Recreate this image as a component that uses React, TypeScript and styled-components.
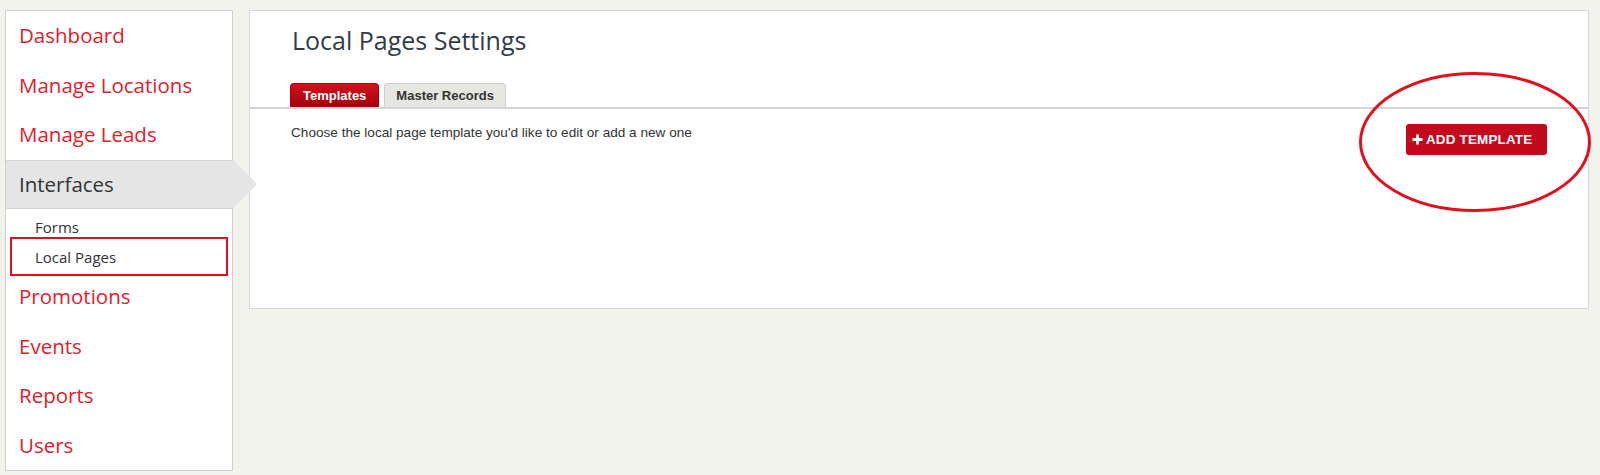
import React from "react";
import styled, { createGlobalStyle, css } from "styled-components";

const GlobalStyle = createGlobalStyle`
  html, body { margin: 0; padding: 0; }
  body {
    background: #f3f3ee;
    font-family: "Open Sans", "Liberation Sans", sans-serif;
  }
`;

const Page = styled.div`
  display: flex;
  align-items: flex-start;
  gap: 16px;
  padding: 10px 11px 0 5px;
  min-height: 475px;
  box-sizing: border-box;
`;

const Sidebar = styled.nav`
  width: 228px;
  flex: 0 0 228px;
  box-sizing: border-box;
  background: #fff;
  border: 1px solid #cfcfcf;
  padding-bottom: 0;
`;

const NavItem = styled.div<{ $active?: boolean }>`
  position: relative;
  height: 49.5px;
  box-sizing: border-box;
  padding: 10px 0 0 13px;
  font-size: 20.5px;
  line-height: 28px;
  color: #e1202b;
  ${(p) =>
    p.$active &&
    css`
      z-index: 2;
      background: #e5e5e5;
      color: #333;
      border-top: 1px solid #d6d6d6;
      border-bottom: 1px solid #d6d6d6;
      margin-right: -1px;
      padding-top: 9px;
      &::after {
        content: "";
        position: absolute;
        top: -1px;
        right: -24px;
        width: 24px;
        height: calc(100% + 2px);
        background: #e5e5e5;
        clip-path: polygon(0 0, 100% 50%, 0 100%);
      }
    `}
`;

const SubMenu = styled.div`
  padding: 3px 0 0;
`;

const SubItem = styled.div<{ $highlighted?: boolean }>`
  position: relative;
  padding-left: 29px;
  font-size: 15px;
  line-height: 30px;
  color: #333;
  ${(p) =>
    p.$highlighted &&
    css`
      &::after {
        content: "";
        position: absolute;
        left: 4px;
        right: 4px;
        top: -5px;
        bottom: -4px;
        border: 2px solid #e3101c;
        box-sizing: border-box;
      }
    `}
`;

const Panel = styled.main`
  position: relative;
  z-index: 1;
  flex: 1;
  height: 299px;
  box-sizing: border-box;
  background: #fff;
  border: 1px solid #d6d6d6;
`;

const Title = styled.h1`
  margin: 0;
  padding: 12px 0 0 42px;
  font-family: "Open Sans", "Liberation Sans", sans-serif;
  font-weight: 400;
  font-size: 25px;
  line-height: 34px;
  color: #333c46;
`;

const TabBar = styled.div`
  display: flex;
  gap: 5px;
  margin-top: 26px;
  padding-left: 40px;
  border-bottom: 2px solid #d4d4d4;
`;

const Tab = styled.div<{ $active?: boolean }>`
  height: 24px;
  box-sizing: border-box;
  padding: 0 11px;
  border-radius: 4px 4px 0 0;
  font-family: "Liberation Sans", Arial, sans-serif;
  font-weight: 700;
  font-size: 13px;
  line-height: 23px;
  ${(p) =>
    p.$active
      ? css`
          background: linear-gradient(#d3101e, #a6000d);
          color: #fff;
          border: 1px solid #b0000f;
          border-bottom: none;
          padding: 0 12px;
        `
      : css`
          background: #e6e6e2;
          color: #333;
          border: 1px solid #cfcfcf;
          border-bottom: none;
        `}
`;

const ContentRow = styled.div`
  display: flex;
  justify-content: space-between;
  align-items: flex-start;
  padding: 15px 41px 0 41px;
`;

const Description = styled.p`
  margin: 0;
  padding-top: 1px;
  font-family: "Liberation Sans", Arial, sans-serif;
  font-size: 13.6px;
  line-height: 16px;
  color: #333;
`;

const AddButton = styled.button`
  display: flex;
  align-items: center;
  gap: 3px;
  width: 141px;
  height: 31px;
  padding: 0 0 0 6px;
  border: none;
  border-radius: 3px;
  background: #c30a1c;
  color: #fff;
  font-family: "Liberation Sans", Arial, sans-serif;
  font-weight: 700;
  font-size: 13.4px;
  letter-spacing: 0.2px;
  white-space: nowrap;
  cursor: pointer;
`;

const Annotation = styled.svg`
  position: absolute;
  left: 1109px;
  top: 61px;
  overflow: visible;
  pointer-events: none;
`;

const PlusIcon = () => (
  <svg width="11" height="11" viewBox="0 0 11 11">
    <path d="M5.5 0.5V10.5M0.5 5.5H10.5" stroke="#fff" strokeWidth="2.8" />
  </svg>
);

export default function App() {
  return (
    <>
      <GlobalStyle />
      <Page>
        <Sidebar>
          <NavItem>Dashboard</NavItem>
          <NavItem>Manage Locations</NavItem>
          <NavItem>Manage Leads</NavItem>
          <NavItem $active>Interfaces</NavItem>
          <SubMenu>
            <SubItem>Forms</SubItem>
            <SubItem $highlighted>Local Pages</SubItem>
          </SubMenu>
          <NavItem>Promotions</NavItem>
          <NavItem>Events</NavItem>
          <NavItem>Reports</NavItem>
          <NavItem>Users</NavItem>
        </Sidebar>
        <Panel>
          <Title>Local Pages Settings</Title>
          <TabBar>
            <Tab $active>Templates</Tab>
            <Tab>Master Records</Tab>
          </TabBar>
          <ContentRow>
            <Description>Choose the local page template you'd like to edit or add a new one</Description>
            <AddButton>
              <PlusIcon />
              ADD TEMPLATE
            </AddButton>
          </ContentRow>
          <Annotation width="232" height="140" viewBox="0 0 232 140">
            <ellipse cx="116" cy="70" rx="114.5" ry="68.5" fill="none" stroke="#e3101c" strokeWidth="3" />
          </Annotation>
        </Panel>
      </Page>
    </>
  );
}
